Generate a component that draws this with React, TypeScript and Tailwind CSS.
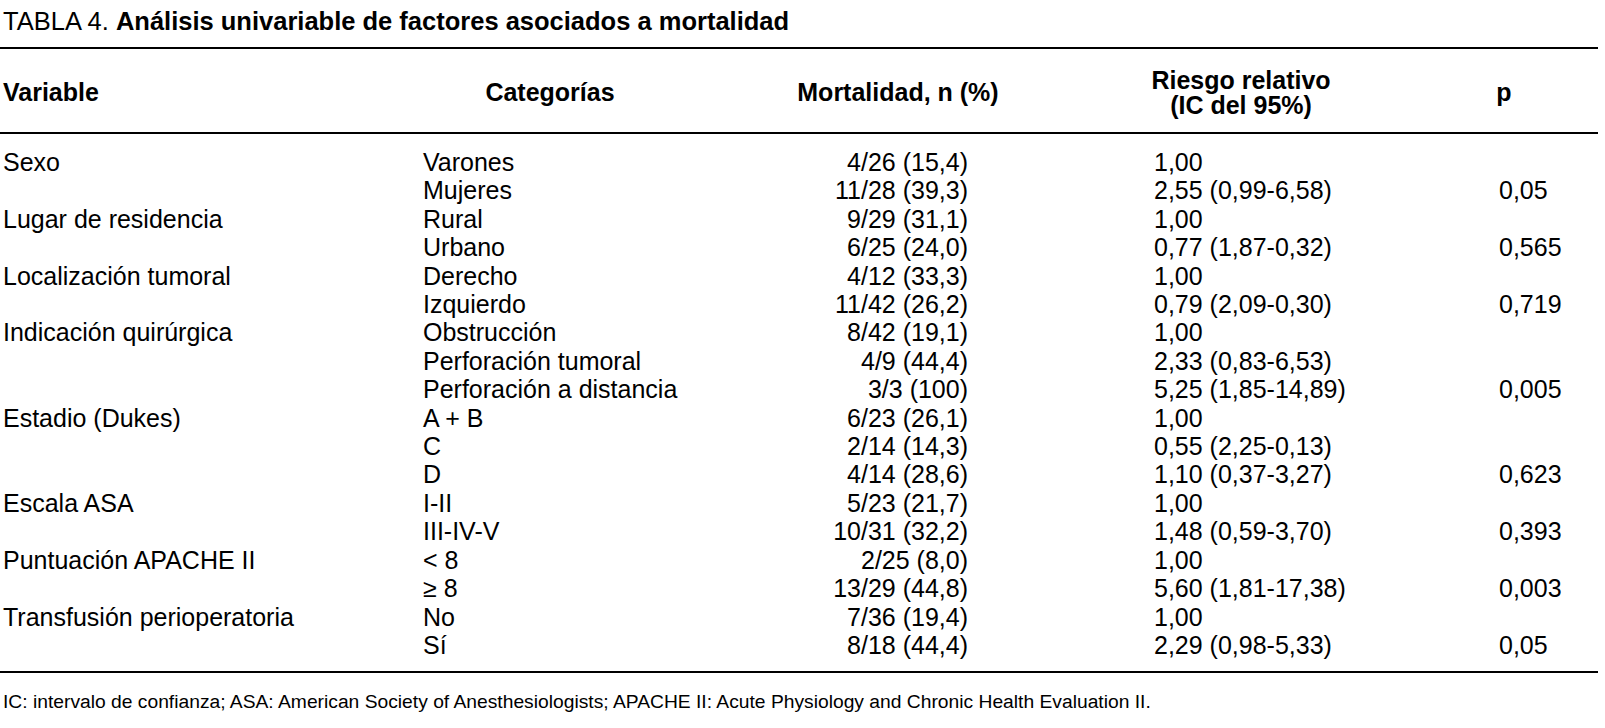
import React from "react";

type Row = [string, string, string, string];
const groups: [string, Row[]][] = [
  ["Sexo", [["Varones", "4/26 (15,4)", "1,00", ""], ["Mujeres", "11/28 (39,3)", "2,55 (0,99-6,58)", "0,05"]]],
  ["Lugar de residencia", [["Rural", "9/29 (31,1)", "1,00", ""], ["Urbano", "6/25 (24,0)", "0,77 (1,87-0,32)", "0,565"]]],
  ["Localización tumoral", [["Derecho", "4/12 (33,3)", "1,00", ""], ["Izquierdo", "11/42 (26,2)", "0,79 (2,09-0,30)", "0,719"]]],
  [
    "Indicación quirúrgica",
    [
      ["Obstrucción", "8/42 (19,1)", "1,00", ""],
      ["Perforación tumoral", "4/9 (44,4)", "2,33 (0,83-6,53)", ""],
      ["Perforación a distancia", "3/3 (100)", "5,25 (1,85-14,89)", "0,005"],
    ],
  ],
  [
    "Estadio (Dukes)",
    [
      ["A + B", "6/23 (26,1)", "1,00", ""],
      ["C", "2/14 (14,3)", "0,55 (2,25-0,13)", ""],
      ["D", "4/14 (28,6)", "1,10 (0,37-3,27)", "0,623"],
    ],
  ],
  ["Escala ASA", [["I-II", "5/23 (21,7)", "1,00", ""], ["III-IV-V", "10/31 (32,2)", "1,48 (0,59-3,70)", "0,393"]]],
  ["Puntuación APACHE II", [["< 8", "2/25 (8,0)", "1,00", ""], ["≥ 8", "13/29 (44,8)", "5,60 (1,81-17,38)", "0,003"]]],
  ["Transfusión perioperatoria", [["No", "7/36 (19,4)", "1,00", ""], ["Sí", "8/18 (44,4)", "2,29 (0,98-5,33)", "0,05"]]],
];

export default function App() {
  return (
    <div className="min-h-[728px] w-[1605px] bg-white text-black font-['Liberation_Sans',Arial,sans-serif]">
      <div className="w-[1598px]">
        <div className="pl-[3px] pt-[7px] text-[25.5px] leading-[28px] whitespace-nowrap">
          TABLA 4. <span className="font-bold">Análisis univariable de factores asociados a mortalidad</span>
        </div>
        <div className="mt-[12px] border-t-2 border-black" />
        <div className="grid h-[83px] grid-cols-[423px_254px_442px_244px_1fr] items-center pt-[4px] text-[25px] font-bold leading-[25px]">
          <div className="pl-[3px]">Variable</div>
          <div className="text-center">Categorías</div>
          <div className="text-center">Mortalidad, n (%)</div>
          <div className="text-center">
            <div>Riesgo relativo</div>
            <div>(IC del 95%)</div>
          </div>
          <div className="pl-[47px] text-center">p</div>
        </div>
        <div className="border-t-2 border-black" />
        <div className="grid grid-cols-[423px_254px_442px_244px_1fr] pt-[14px] pb-[12px] text-[25px] leading-[28.4px] whitespace-nowrap">
          {groups.map(([name, rows]) =>
            rows.map((r, i) => (
              <React.Fragment key={name + i}>
                <div className="pl-[3px]">{i === 0 ? name : ""}</div>
                <div>{r[0]}</div>
                <div className="pr-[151px] text-right">{r[1]}</div>
                <div className="pl-[35px]">{r[2]}</div>
                <div className="pl-[136px]">{r[3]}</div>
              </React.Fragment>
            ))
          )}
        </div>
        <div className="border-t-2 border-black" />
        <div className="mt-[18px] pl-[3px] text-[19.25px] leading-[22px] whitespace-nowrap">
          IC: intervalo de confianza; ASA: American Society of Anesthesiologists; APACHE II: Acute Physiology and Chronic Health Evaluation II.
        </div>
      </div>
    </div>
  );
}
